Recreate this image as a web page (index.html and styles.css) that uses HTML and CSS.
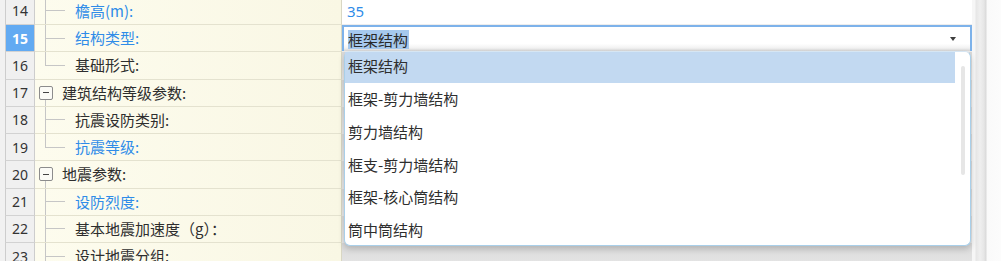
FILE: index.html
```html
<!DOCTYPE html>
<html lang="zh-CN">
<head>
<meta charset="utf-8">
<title>属性</title>
<link rel="stylesheet" href="styles.css">
</head>
<body>
<div class="page">
  <div class="grid">
    <div class="row first">
      <div class="strip"></div><div class="num">14</div>
      <div class="name"><div class="conn"><div class="up"></div><div class="down"></div></div><span class="label blue">檐高(m):</span></div>
      <div class="val"><span class="vtext blue">35</span></div>
    </div>
    <div class="row">
      <div class="strip"></div><div class="num sel">15</div>
      <div class="name"><div class="conn"><div class="up"></div><div class="down"></div></div><span class="label blue">结构类型:</span></div>
      <div class="val">
        <div class="combo"><span class="seltext">框架结构</span><span class="arrow"></span></div>
      </div>
    </div>
    <div class="row">
      <div class="strip"></div><div class="num">16</div>
      <div class="name"><div class="conn last"><div class="up"></div><div class="down"></div></div><span class="label">基础形式:</span></div>
      <div class="val grey"></div>
    </div>
    <div class="row">
      <div class="strip"></div><div class="num">17</div>
      <div class="name"><div class="gtree"><div class="gap"></div><div class="box"><span class="minus"></span></div><div class="stem"></div></div><span class="glabel">建筑结构等级参数:</span></div>
      <div class="val grey"></div>
    </div>
    <div class="row">
      <div class="strip"></div><div class="num">18</div>
      <div class="name"><div class="conn"><div class="up"></div><div class="down"></div></div><span class="label">抗震设防类别:</span></div>
      <div class="val grey"></div>
    </div>
    <div class="row">
      <div class="strip"></div><div class="num">19</div>
      <div class="name"><div class="conn last"><div class="up"></div><div class="down"></div></div><span class="label blue">抗震等级:</span></div>
      <div class="val grey"></div>
    </div>
    <div class="row">
      <div class="strip"></div><div class="num">20</div>
      <div class="name"><div class="gtree"><div class="gap"></div><div class="box"><span class="minus"></span></div><div class="stem"></div></div><span class="glabel">地震参数:</span></div>
      <div class="val grey"></div>
    </div>
    <div class="row">
      <div class="strip"></div><div class="num">21</div>
      <div class="name"><div class="conn"><div class="up"></div><div class="down"></div></div><span class="label blue">设防烈度:</span></div>
      <div class="val grey"></div>
    </div>
    <div class="row">
      <div class="strip"></div><div class="num">22</div>
      <div class="name"><div class="conn"><div class="up"></div><div class="down"></div></div><span class="label">基本地震加速度（g）：</span></div>
      <div class="val grey"></div>
    </div>
    <div class="row">
      <div class="strip"></div><div class="num">23</div>
      <div class="name"><div class="conn"><div class="up"></div><div class="down"></div></div><span class="label">设计地震分组:</span></div>
      <div class="val grey"></div>
    </div>
  </div>
  <div class="vscroll"></div>

  <div class="dropdown">
    <div class="list">
      <div class="item hl">框架结构</div>
      <div class="item">框架-剪力墙结构</div>
      <div class="item">剪力墙结构</div>
      <div class="item">框支-剪力墙结构</div>
      <div class="item">框架-核心筒结构</div>
      <div class="item">筒中筒结构</div>
    </div>
    <div class="dscroll"><div class="thumb"></div></div>
  </div>
</div>
</body>
</html>
```
FILE: styles.css
```css
html, body {
  margin: 0;
  padding: 0;
  background: #ffffff;
}
body {
  width: 1001px;
  height: 261px;
  overflow: hidden;
  font-family: "Noto Sans CJK SC", "Noto Sans", sans-serif;
  font-size: 15px;
  color: #2e2e2e;
}
.page {
  position: relative;
  display: flex;
  width: 1001px;
  height: 261px;
  overflow: hidden;
}
.grid {
  width: 972px;
  display: flex;
  flex-direction: column;
  flex: none;
}
.row {
  display: flex;
  height: 27.25px;
  flex: none;
}
.row.first {
  margin-top: -2.25px;
}
.strip {
  width: 5px;
  background: #f1f1f1;
  flex: none;
}
.num {
  flex: none;
  box-sizing: border-box;
  background: #f0f0f0;
  border-left: 1px solid #cdcdcd;
  border-right: 1px solid #cdcdcd;
  border-bottom: 1px solid #d2d2d2;
  width: 30px;
  display: flex;
  align-items: center;
  justify-content: center;
  font-family: "Noto Sans", "Open Sans", sans-serif;
  font-size: 14px;
  color: #333333;
}
.num.sel {
  background: #62aaf2;
  color: #ffffff;
  font-weight: bold;
}
.name {
  width: 307px;
  flex: none;
  box-sizing: border-box;
  background: linear-gradient(to right, #fdfcee, #f9f7e4);
  border-right: 1px solid #d9d7c4;
  border-bottom: 1px solid #e4e2cf;
  display: flex;
  align-items: stretch;
  white-space: nowrap;
}
.conn {
  width: 20px;
  margin-left: 10px;
  display: flex;
  flex-direction: column;
  flex: none;
}
.conn .up {
  flex: 1;
  border-left: 1px solid #c6c6c6;
  border-bottom: 1px solid #c6c6c6;
}
.conn .down {
  flex: 1;
  border-left: 1px solid #c6c6c6;
}
.conn.last .down {
  border-left-color: transparent;
}
.label {
  margin-left: 10px;
  align-self: center;
  line-height: 20px;
}
.blue {
  color: #2f8ce8;
}
.gtree {
  width: 14px;
  margin-left: 4px;
  display: flex;
  flex-direction: column;
  flex: none;
}
.gtree .gap {
  flex: 1;
}
.gtree .stem {
  flex: 1;
  margin-left: 6px;
  border-left: 1px solid #c6c6c6;
}
.box {
  width: 14px;
  height: 14px;
  box-sizing: border-box;
  border: 1px solid #8c8c8c;
  border-radius: 2px;
  background: #fbfbf6;
  display: flex;
  align-items: center;
  justify-content: center;
  flex: none;
}
.minus {
  width: 6px;
  height: 1px;
  background: #444444;
}
.glabel {
  margin-left: 9px;
  align-self: center;
  line-height: 20px;
}
.val {
  flex: 1;
  box-sizing: border-box;
  background: #ffffff;
  border-bottom: 1px solid #ededed;
  display: flex;
  align-items: center;
}
.val.grey {
  background: linear-gradient(#d9d9d9, #e8e8e8);
  border-bottom: none;
}
.vtext {
  margin-left: 5px;
  font-family: "Noto Sans", "Open Sans", sans-serif;
  font-size: 15px;
}
.combo {
  width: 100%;
  height: 100%;
  box-sizing: border-box;
  border: 2px solid #7db2ea;
  border-bottom: none;
  background: linear-gradient(#ffffff 70%, #f1f1f1 88%, #d6d6d6 100%);
  display: flex;
  align-items: center;
  padding-left: 4px;
}
.seltext {
  background: #a6c9ee;
  color: #2a2a2a;
  line-height: 19px;
  padding-right: 1px;
}
.arrow {
  margin-left: auto;
  margin-right: 14px;
  width: 0;
  height: 0;
  border-left: 3.5px solid transparent;
  border-right: 3.5px solid transparent;
  border-top: 4px solid #3e3e3e;
}
.vscroll {
  flex: 1;
  background: linear-gradient(to right, #f6f6f6 0px, #f6f6f6 3px, #e6e6e6 4px, #efefef 8px, #e6e6e6 12px, #d9d9d9 14px, #fafafa 15px, #fcfcfc 29px);
}
.dropdown {
  position: absolute;
  left: 344px;
  top: 51px;
  width: 627px;
  height: 195px;
  box-sizing: border-box;
  background: #ffffff;
  border: 1px solid #a9cfe9;
  border-top-color: #d6e6f3;
  border-radius: 6px;
  box-shadow: 0 3px 6px rgba(0, 0, 0, 0.18);
  display: flex;
}
.list {
  flex: 1;
  display: flex;
  flex-direction: column;
}
.item {
  height: 32.6px;
  flex: none;
  box-sizing: border-box;
  padding-left: 3px;
  padding-bottom: 4px;
  display: flex;
  align-items: center;
  white-space: nowrap;
  color: #2e2e2e;
}
.item.hl {
  background: #c2d9f1;
  height: 30.6px;
  margin-bottom: 2px;
}
.dscroll {
  width: 15px;
  flex: none;
  padding-left: 6px;
  box-sizing: border-box;
}
.thumb {
  margin-top: 14px;
  width: 4px;
  height: 109px;
  border-radius: 2px;
  background: #e6e6e6;
}
```
